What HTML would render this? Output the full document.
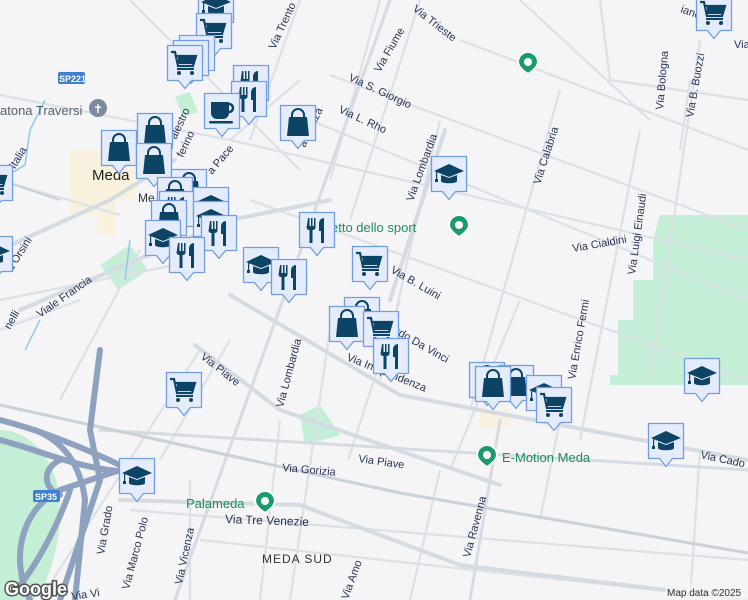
<!DOCTYPE html>
<html><head><meta charset="utf-8"><style>
html,body{margin:0;padding:0;width:748px;height:600px;overflow:hidden;background:#f5f4f6}
svg{display:block}
text{font-family:"Liberation Sans",sans-serif;fill:#263553;font-size:11px}
.g{fill:#1e8e5e;font-size:13px}
</style></head><body>
<svg width="748" height="600" viewBox="0 0 748 600" xmlns="http://www.w3.org/2000/svg">
<defs>
<g id="box"><path d="M1.5 1.5h35v35h-11l-6.5 8-6.5-8h-11z" fill="#e4ecfc" stroke="#729de3" stroke-width="1.3" stroke-linejoin="round"/></g>
<g id="cart"><use href="#box"/><g fill="#0d4466"><path d="M5 8h4l3 14h15l3-10h-19" fill="none" stroke="#0d4466" stroke-width="2.2"/><rect x="12" y="12" width="17" height="8"/><rect x="11" y="24" width="17" height="2"/><circle cx="13" cy="29" r="2"/><circle cx="26" cy="29" r="2"/></g></g>
<g id="bag"><use href="#box"/><path d="M13 13v-2a6 6 0 0 1 12 0v2" fill="none" stroke="#0d4466" stroke-width="2"/><path d="M10 13h18l2 19h-22z" fill="#0d4466"/></g>
<g id="fork"><use href="#box"/><g fill="#0d4466"><path d="M10 7h1.5v8h1.5v-8h1.5v8h1.5v-8h1.5v10a3 3 0 0 1-3 2v13h-3v-13a3 3 0 0 1-3-2z"/><path d="M23 32v-12h-2v-8a5 5 0 0 1 5-5v25z"/></g></g>
<g id="grad"><use href="#box"/><g fill="#0d4466"><path d="M4 16l15-7 15 7-15 6z"/><path d="M11 20v6c0 3 16 3 16 0v-6l-8 3z"/><rect x="6" y="17" width="1.2" height="8"/><rect x="5" y="24" width="3" height="3"/></g></g>
<g id="cup"><use href="#box"/><g fill="#0d4466"><path d="M8 10h18v11a6 6 0 0 1-6 6h-6a6 6 0 0 1-6-6z"/><path d="M26 12a4 4 0 0 1 0 8" fill="none" stroke="#0d4466" stroke-width="2.5"/><rect x="6" y="29" width="24" height="2.5" rx="1"/></g></g>
<g id="pin"><path d="M0 -11a10 10 0 0 1 10 10c0 6-10 12-10 12s-10-6-10-12a10 10 0 0 1 10-10z" fill="#1a9b6a" stroke="#fff" stroke-width="2"/><circle cx="0" cy="-1" r="4" fill="#fff"/></g>
</defs>

<!-- areas -->
<path d="M660 215h88v160h-130v-55h15v-40h20v-40z" fill="#c4eed5"/>
<path d="M610 375h138v10h-138z" fill="#c4eed5"/>
<path d="M0 430c30 0 60 30 60 80s-20 90-30 90h-30z" fill="#c4eed5"/>
<path d="M100 265l30-20 18 25-30 20z" fill="#c4eed5"/>
<path d="M300 415l20-10 20 30-35 10z" fill="#c4eed5"/>
<path d="M70 150h45v20h20v30h-20v35h-18v-20h-27z" fill="#f8f1de"/>
<path d="M480 410h30v18h-30z" fill="#f8f1de"/>
<path d="M175 97l15-5 8 20-15 5z" fill="#c4eed5"/>

<!-- minor roads -->
<g stroke="#dbe1e7" stroke-width="2.2" fill="none">
<path d="M0 95L230 140L748 260"/><path d="M230 140L300 80"/><path d="M130 0L300 170"/>
<path d="M300 0L250 140"/><path d="M380 0L330 180"/><path d="M420 0L350 220"/>
<path d="M460 40L748 150"/><path d="M330 75L748 230"/><path d="M310 120L748 300"/>
<path d="M250 200L748 380"/><path d="M440 120L380 380"/><path d="M560 90L470 410"/>
<path d="M640 130L580 440"/><path d="M700 40L650 380"/><path d="M690 80L680 150"/>
<path d="M600 0L610 80L748 100"/><path d="M520 0L650 120"/><path d="M0 180L120 215"/>
<path d="M0 300L200 260"/><path d="M40 600L200 350"/><path d="M200 540L748 600"/>
<path d="M130 510L748 560"/><path d="M190 480L190 600"/><path d="M280 420L260 600"/>
<path d="M440 470L410 600"/><path d="M330 330L290 600"/><path d="M140 250L60 400"/>
<path d="M0 330L80 300"/><path d="M560 420L540 520"/><path d="M700 450L690 600"/>
<path d="M230 340L160 460"/><path d="M400 300L348 460"/><path d="M520 300L450 470"/>
</g>
<!-- main roads -->
<g stroke="#d4dbe2" stroke-width="4" fill="none" stroke-linecap="round">
<path d="M230 295L400 395L748 460"/>
<path d="M195 345L280 410L500 485"/>
<path d="M100 430L748 470" stroke-width="3"/>
<path d="M120 500L300 505L460 565L748 600"/>
<path d="M390 0L290 280L175 600" stroke-width="3"/>
<path d="M445 130L390 300"/>
<path d="M500 420L470 600" stroke-width="3"/>
<path d="M0 250L110 200L175 160"/>
<path d="M20 310L230 220L330 200"/>
</g>
<!-- railway -->
<path d="M0 405L250 460L400 493L748 553" stroke="#c9d1d9" stroke-width="3" fill="none"/>
<path d="M0 180L60 200" stroke="#c9d1d9" stroke-width="2"/>
<!-- river -->
<path d="M0 180L25 165L30 130L45 100 M25 350L40 320 M130 240L125 280" stroke="#8ec9ee" stroke-width="1.5" fill="none"/>

<!-- highway -->
<g stroke="#8ea2bf" stroke-width="6" fill="none" stroke-linecap="round">
<path d="M100 350L90 430L100 480L60 600"/>
<path d="M0 420C40 430 90 450 130 470"/>
<path d="M0 440C40 450 80 470 130 472"/>
<path d="M30 600C10 560 20 510 60 490L120 470"/>
<path d="M35 430C60 440 80 460 85 500L75 600"/>
<path d="M60 460C40 470 45 490 60 495"/>
<path d="M20 585C40 560 60 520 70 490"/>
</g>
<rect x="33" y="490" width="27" height="12" rx="2" fill="#3d7fd1"/>
<text x="35" y="500" style="fill:#fff;font-size:9px;font-weight:bold">SP35</text>
<rect x="58" y="72" width="27" height="12" rx="2" fill="#3d7fd1"/>
<text x="59" y="82" style="fill:#fff;font-size:9px;font-weight:bold">SP221</text>

<!-- labels -->
<text x="0" y="115" style="font-size:13px;fill:#55606e">atona Traversi</text>
<circle cx="98" cy="108" r="9" fill="#7d8aa0"/><text x="93" y="113" style="fill:#fff;font-size:12px">✝</text>
<text x="92" y="180" style="font-size:15px;fill:#222">Meda</text>
<text x="138" y="202" style="font-size:12px;fill:#333">Me</text>
<text transform="translate(5,185) rotate(-58)">rso Italia</text>
<text transform="translate(12,272) rotate(-58)">a Orsini</text>
<text transform="translate(10,330) rotate(-60)">nelli</text>
<text transform="translate(40,318) rotate(-35)">Viale Francia</text>
<text transform="translate(176,140) rotate(-65)">alestro</text>
<text transform="translate(183,158) rotate(-65)">ferino</text>
<text transform="translate(212,175) rotate(-50)">a Pace</text>
<text transform="translate(275,50) rotate(-65)">Via Trento</text>
<text transform="translate(305,148) rotate(-65)">a Monza</text>
<text transform="translate(348,80) rotate(25)">Via S. Giorgio</text>
<text transform="translate(338,112) rotate(25)">Via L. Rho</text>
<text transform="translate(380,73) rotate(-60)">Via Fiume</text>
<text transform="translate(412,10) rotate(38)">Via Trieste</text>
<text transform="translate(413,202) rotate(-70)">Via Lombardia</text>
<text transform="translate(540,185) rotate(-72)">Via Calabria</text>
<text transform="translate(663,110) rotate(-85)">Via Bologna</text>
<text transform="translate(693,118) rotate(-80)">Via B. Buozzi</text>
<text transform="translate(635,275) rotate(-82)">Via Luigi Einaudi</text>
<text transform="translate(573,252) rotate(-10)">Via Cialdini</text>
<text transform="translate(575,380) rotate(-80)">Via Enrico Fermi</text>
<text transform="translate(390,272) rotate(30)">Via B. Luini</text>
<text transform="translate(368,318) rotate(30)">Leonardo Da Vinci</text>
<text transform="translate(346,360) rotate(22)">Via Indipendenza</text>
<text transform="translate(200,358) rotate(38)">Via Piave</text>
<text transform="translate(283,408) rotate(-75)">Via Lombardia</text>
<text transform="translate(358,462) rotate(8)">Via Piave</text>
<text transform="translate(282,471) rotate(5)">Via Gorizia</text>
<text transform="translate(700,458) rotate(12)">Via Cado</text>
<text transform="translate(470,558) rotate(-75)">Via Ravenna</text>
<text transform="translate(104,555) rotate(-80)">Via Grado</text>
<text transform="translate(129,590) rotate(-75)">Via Marco Polo</text>
<text transform="translate(182,585) rotate(-78)">Via Vicenza</text>
<text transform="translate(348,600) rotate(-70)">Via Amo</text>
<text transform="translate(225,523) rotate(2)" style="font-size:12px">Via Tre Venezie</text>
<text x="262" y="563" style="font-size:12px;letter-spacing:1px;fill:#333">MEDA SUD</text>
<text transform="translate(72,600) rotate(-8)">Via Vi</text>
<text transform="translate(680,12) rotate(20)">iano</text>
<text x="734" y="48">Via</text>
<text x="318" y="232" class="g">zzetto dello sport</text>
<text x="502" y="462" class="g">E-Motion Meda</text>
<text x="186" y="508" class="g">Palameda</text>
<use href="#pin" x="528" y="63"/><use href="#pin" x="459" y="226"/><use href="#pin" x="487" y="456"/><use href="#pin" x="265" y="502"/>
<text x="5" y="595" style="font-size:18px;fill:#fff;stroke:#555;stroke-width:3;paint-order:stroke;font-weight:bold">Google</text>
<rect x="665" y="583" width="83" height="17" fill="#f5f4f6" opacity=".8"/>
<text x="667" y="596" style="font-size:10px;fill:#333">Map data ©2025</text>

<!-- markers -->
<use href="#grad" x="197" y="-14"/><use href="#cart" x="695" y="-6"/>
<use href="#cart" x="195" y="12"/><use href="#cart" x="178" y="34"/><use href="#cart" x="172" y="39"/><use href="#cart" x="166" y="44"/>
<use href="#fork" x="232" y="64"/><use href="#fork" x="230" y="80"/><use href="#cup" x="203" y="92"/>
<use href="#bag" x="136" y="112"/><use href="#bag" x="100" y="129"/><use href="#bag" x="135" y="142"/><use href="#bag" x="279" y="104"/>
<use href="#cart" x="-24" y="164"/><use href="#grad" x="-24" y="235"/><use href="#grad" x="430" y="155"/>
<use href="#bag" x="170" y="168"/><use href="#bag" x="156" y="176"/><use href="#fork" x="158" y="190"/><use href="#grad" x="192" y="186"/>
<use href="#bag" x="150" y="199"/><use href="#grad" x="192" y="200"/><use href="#fork" x="200" y="214"/><use href="#grad" x="144" y="219"/><use href="#fork" x="168" y="236"/>
<use href="#fork" x="298" y="211"/><use href="#grad" x="242" y="246"/><use href="#fork" x="270" y="258"/><use href="#cart" x="351" y="245"/>
<use href="#bag" x="343" y="296"/><use href="#bag" x="328" y="305"/><use href="#cart" x="362" y="310"/><use href="#fork" x="372" y="337"/>
<use href="#bag" x="468" y="361"/><use href="#bag" x="497" y="364"/><use href="#bag" x="474" y="365"/><use href="#grad" x="525" y="374"/><use href="#cart" x="535" y="386"/>
<use href="#grad" x="683" y="357"/><use href="#grad" x="647" y="422"/><use href="#cart" x="165" y="371"/><use href="#grad" x="118" y="457"/>
</svg>
</body></html>
